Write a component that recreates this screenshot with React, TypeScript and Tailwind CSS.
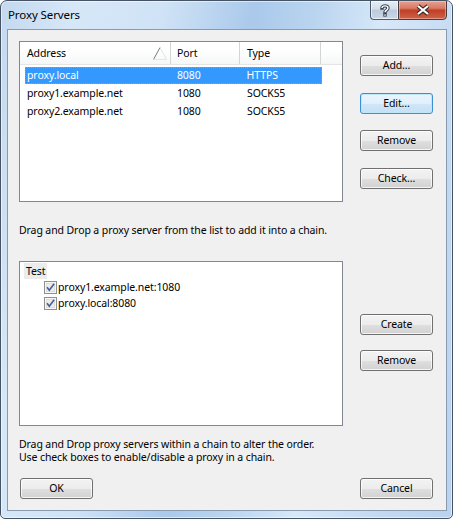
import React from "react";

const proxies = [
    {id: 1, address: 'proxy.local', port: '8080', type: 'HTTPS', selected: true},
    {id: 2, address: 'proxy1.example.net', port: '1080', type: 'SOCKS5', selected: false},
    {id: 3, address: 'proxy2.example.net', port: '1080', type: 'SOCKS5', selected: false},
]

const chain = ['proxy1.example.net:1080', 'proxy.local:8080']

function WinButton({label, isDefault = false, className = ''}: { label: string, isDefault?: boolean, className?: string }) {
    const look = isDefault
        ? 'border-[#3c8fd0] bg-[linear-gradient(to_bottom,#eaf5fd_0%,#e0f0fb_50%,#cfe7f8_51%,#c4e1f6_100%)] shadow-[inset_0_0_0_1px_#bfe6fb]'
        : 'border-[#707070] bg-[linear-gradient(to_bottom,#f3f3f3_0%,#ececec_50%,#dfdfdf_51%,#d2d2d2_100%)] shadow-[inset_0_0_0_1px_rgba(255,255,255,0.75)]'
    return (
        <div className={`w-[73px] h-[21px] rounded-[3px] border flex items-center justify-center text-black ${look} ${className}`}>
            {label}
        </div>
    )
}

function CheckBox() {
    return (
        <svg width="13" height="13" viewBox="0 0 13 13" className="shrink-0">
            <rect x="0.5" y="0.5" width="12" height="12" fill="#f6f6f6" stroke="#8e8f8f"/>
            <rect x="2" y="2" width="9" height="9" fill="#dedede"/>
            <rect x="3" y="3" width="7" height="7" fill="#ececec"/>
            <path d="M3 6.3 L5.3 9.2 L10.2 2.8" stroke="#4b5f98" strokeWidth="1.7" fill="none"/>
        </svg>
    )
}

function SortArrow() {
    return (
        <svg width="14" height="13" viewBox="0 0 14 13">
            <line x1="0.5" y1="12.5" x2="7" y2="0.5" stroke="#7a7a7a"/>
            <line x1="7" y1="0.5" x2="13.5" y2="12.5" stroke="#e2e2e2"/>
            <line x1="0.5" y1="12.5" x2="13.5" y2="12.5" stroke="#e6e6e6"/>
        </svg>
    )
}

export default function App() {
    return (
        <div className="w-[453px] h-[519px] font-['Noto_Sans',sans-serif] text-black">
            <div className="w-full h-full flex flex-col border border-[#465364] rounded-t-[7px] rounded-b-[5px] overflow-hidden shadow-[inset_0_0_0_1px_rgba(255,255,255,0.55)] bg-[linear-gradient(100deg,#c4d9ef_0%,#d6e7f8_14%,#d0e3f6_30%,#aac9eb_47%,#b9d4ef_58%,#d7e8f9_71%,#c3d9f1_87%,#b9d2ee_100%)]">

                {/* title bar */}
                <div className="h-[28px] flex items-start justify-between shrink-0">
                    <span className="pl-[7px] pt-[6px] text-[11.5px] leading-[16px] tracking-[-0.1px]">Proxy Servers</span>
                    <div className="flex mr-[5px] -mt-px">
                        <div className="w-[28px] h-[20px] flex items-center justify-center border border-[#4c5a6c] border-r-0 rounded-bl-[4px] bg-[linear-gradient(to_bottom,#e6eef7_0%,#d3deea_45%,#bccbdc_50%,#c9d7e6_100%)] shadow-[inset_0_0_0_1px_rgba(255,255,255,0.6)]">
                            <svg width="10" height="13" viewBox="0 0 10 13">
                                <path d="M2 4 C2 1.2 8 1.2 8 4 C8 6 5 6.2 5 8.3" stroke="#3a4656" strokeWidth="3.4" fill="none" strokeLinecap="square"/>
                                <rect x="3.3" y="9.6" width="3.4" height="3" fill="#3a4656"/>
                                <path d="M2 4 C2 1.2 8 1.2 8 4 C8 6 5 6.2 5 8.3" stroke="#ffffff" strokeWidth="1.4" fill="none"/>
                                <rect x="4.3" y="10.4" width="1.4" height="1.4" fill="#ffffff"/>
                            </svg>
                        </div>
                        <div className="w-[49px] h-[20px] flex items-center justify-center border border-[#4c3a3a] rounded-br-[4px] bg-[linear-gradient(to_bottom,#e8a08f_0%,#d77a66_40%,#c13f27_52%,#cd6348_100%)] shadow-[inset_0_0_0_1px_rgba(255,220,210,0.45)]">
                            <svg width="16" height="12" viewBox="0 0 16 12">
                                <path d="M3 2 L13 10 M13 2 L3 10" stroke="#3b2a28" strokeWidth="4.2"/>
                                <path d="M3 2 L13 10 M13 2 L3 10" stroke="#ffffff" strokeWidth="2.2"/>
                            </svg>
                        </div>
                    </div>
                </div>

                {/* client area */}
                <div className="ml-[6px] w-[440px] h-[482px] border border-[#8a9aae] bg-[#f0f0f0] pl-[11px] pt-[11px] flex flex-col text-[10.5px] leading-[13px] tracking-[-0.1px]">

                    <div className="flex">
                        <div className="w-[324px] h-[161px] border border-[#828790] bg-white flex flex-col">
                            <div className="h-[23px] flex border-b border-[#e5e5e5] bg-[linear-gradient(to_bottom,#ffffff_0%,#ffffff_40%,#f5f6f7_100%)]">
                                <div className="w-[151px] border-r border-[#d5d5d5] pl-[7px] flex items-center justify-between">
                                    <span>Address</span>
                                    <span className="mr-[3px] mt-[1px]"><SortArrow/></span>
                                </div>
                                <div className="w-[69px] border-r border-[#d5d5d5] pl-[6px] flex items-center">Port</div>
                                <div className="w-[81px] border-r border-[#d5d5d5] pl-[7px] flex items-center">Type</div>
                                <div className="flex-1"/>
                            </div>
                            <div className="pt-[1px]">
                                {proxies.map((p) => (
                                    <div key={p.id} className="h-[18px] pt-[1px]">
                                        <div className={`ml-[5px] w-[297px] h-[17px] flex items-center ${p.selected ? 'bg-[#3399ff] text-white border border-dotted border-[#d9903f]' : ''}`}>
                                            <div className={`w-[146px] ${p.selected ? 'pl-[1px]' : 'pl-[2px]'}`}>{p.address}</div>
                                            <div className="w-[69px] pl-[6px]">{p.port}</div>
                                            <div className="w-[82px] pl-[7px]">{p.type}</div>
                                        </div>
                                    </div>
                                ))}
                            </div>
                        </div>
                        <div className="ml-[17px] mt-[14px] flex flex-col">
                            <WinButton label="Add..."/>
                            <WinButton label="Edit..." isDefault className="mt-[17px]"/>
                            <WinButton label="Remove" className="mt-[16px]"/>
                            <WinButton label="Check..." className="mt-[17px]"/>
                        </div>
                    </div>

                    <p className="mt-[22px]">Drag and Drop a proxy server from the list to add it into a chain.</p>

                    <div className="flex mt-[24px]">
                        <div className="w-[324px] h-[165px] border border-[#828790] bg-white pt-[1px]">
                            <div className="h-[16px] flex items-center pl-[4px]">
                                <span className="bg-[#ececec] px-[2px] h-[16px] flex items-center">Test</span>
                            </div>
                            {chain.map((c) => (
                                <div key={c} className="h-[16px] flex items-center pl-[24px]">
                                    <CheckBox/>
                                    <span className="ml-[1px]">{c}</span>
                                </div>
                            ))}
                        </div>
                        <div className="ml-[17px] mt-[53px] flex flex-col">
                            <WinButton label="Create"/>
                            <WinButton label="Remove" className="mt-[15px]"/>
                        </div>
                    </div>

                    <div className="mt-[12px] flex flex-col">
                        <p className="h-[13px]">Drag and Drop proxy servers within a chain to alter the order.</p>
                        <p className="h-[13px]">Use check boxes to enable/disable a proxy in a chain.</p>
                    </div>

                    <div className="flex mt-[14px] pl-[1px]">
                        <WinButton label="OK"/>
                        <WinButton label="Cancel" className="ml-[267px]"/>
                    </div>
                </div>
            </div>
        </div>
    )
}
